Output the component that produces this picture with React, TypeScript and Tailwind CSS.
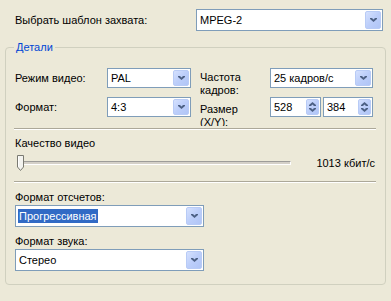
import React from "react";

const font = "font-['Tahoma','Liberation_Sans',sans-serif]";

const Arrow: React.FC<{ up?: boolean }> = ({ up }) => (
  <svg width="7" height="4" viewBox="0 0 7 4" className={up ? "rotate-180" : ""}>
    <path d="M0 0h2l1.5 1.5L5 0h2v1L3.5 4L0 1z" fill="#4D6185" />
  </svg>
);

const DropButton = () => (
  <div className="m-[1px] flex h-[calc(100%-2px)] w-[16px] shrink-0 items-center justify-center rounded-[2px] border border-[#B8CBF6] bg-gradient-to-br from-[#D5E1FE] via-[#BCCEFA] to-[#B0C5F6]">
    <Arrow />
  </div>
);

interface comboProps {
  value: string;
  className: string;
  selected?: boolean;
}

const Combo: React.FC<comboProps> = ({ value, className, selected }) => (
  <div className={"flex items-center border border-[#7F9DB9] bg-white " + className}>
    <div className="flex-1 pl-[2px]">
      {selected ? (
        <span className="bg-[#316AC5] px-[1px] py-[1px] text-white">{value}</span>
      ) : (
        <span className="pl-[1px]">{value}</span>
      )}
    </div>
    <DropButton />
  </div>
);

const Spinner: React.FC<{ value: string; className: string }> = ({ value, className }) => (
  <div className={"flex h-[20px] items-center border border-[#7F9DB9] bg-white " + className}>
    <span className="flex-1 pl-[3px]">{value}</span>
    <div className="m-[1px] flex h-[calc(100%-2px)] w-[13px] flex-col rounded-[2px] border border-[#B8CBF6] bg-gradient-to-br from-[#D5E1FE] via-[#BCCEFA] to-[#B0C5F6]">
      <div className="flex flex-1 items-end justify-center pb-[1px]">
        <Arrow up />
      </div>
      <div className="flex flex-1 items-start justify-center pt-[1px]">
        <Arrow />
      </div>
    </div>
  </div>
);

const Separator = () => (
  <div className="ml-[8px] mr-[9px] border-t border-b border-t-[#ACA899] border-b-white" />
);

export default function App() {
  return (
    <div className={"h-[301px] w-[391px] bg-[#ECE9D8] pt-[9px] text-[11px] leading-[13px] text-black " + font}>
      {/* template */}
      <div className="flex items-center pl-[15px]">
        <div className="w-[181px]">Выбрать шаблон захвата:</div>
        <Combo value="MPEG-2" className="h-[22px] w-[187px]" />
      </div>

      {/* details group */}
      <div className="relative mx-[5px] mt-[16px] h-[238px] rounded-[4px] border border-[#D0D0BF] pt-[20px]">
        <div className="absolute left-[8px] top-[-7px] bg-[#ECE9D8] px-[2px] text-[#0046D5]">Детали</div>

        <div className="flex h-[20px] items-start pl-[9px]">
          <div className="flex h-[20px] w-[92px] items-center">Режим видео:</div>
          <Combo value="PAL" className="h-[20px] w-[84px]" />
          <div className="ml-[9px] h-[20px] w-[70px]">
            <div className="pt-[3px]">
              Частота
              <br />
              кадров:
            </div>
          </div>
          <Combo value="25 кадров/с" className="h-[20px] w-[103px]" />
        </div>

        <div className="mt-[9px] flex h-[20px] items-start pl-[9px]">
          <div className="flex h-[20px] w-[92px] items-center">Формат:</div>
          <Combo value="4:3" className="h-[20px] w-[84px]" />
          <div className="ml-[9px] h-[20px] w-[70px]">
            <div className="h-[29px] overflow-hidden pt-[6px]">
              Размер
              <br />
              (X/Y):
            </div>
          </div>
          <Spinner value="528" className="w-[51px]" />
          <Spinner value="384" className="ml-[2px] w-[50px]" />
        </div>

        <div className="mt-[11px]">
          <Separator />
        </div>

        {/* quality */}
        <div className="mt-[7px] pl-[9px]">Качество видео</div>
        <div className="mt-[3px] flex h-[20px] items-center pl-[12px] pr-[10px]">
          <div className="relative h-[4px] w-[273px] border border-t-[#9D9C99] border-l-[#9D9C99] border-b-white border-r-white bg-[#D4D0C8]">
            <svg className="absolute left-[-2px] top-[-7px]" width="7" height="16" viewBox="0 0 7 16">
              <path d="M0.5 0.5h6v11.5l-3 3.5l-3-3.5z" fill="#F3F3EF" stroke="#7A7A72" />
              <path d="M1.5 1.5v10" stroke="#FFFFFF" />
            </svg>
          </div>
          <div className="flex-1 text-right">1013 кбит/с</div>
        </div>

        <div className="mt-[8px]">
          <Separator />
        </div>

        <div className="mt-[8px] pl-[9px]">Формат отсчетов:</div>
        <div className="mt-[1px] pl-[9px]">
          <Combo value="Прогрессивная" selected className="h-[22px] w-[189px]" />
        </div>
        <div className="mt-[8px] pl-[9px]">Формат звука:</div>
        <div className="mt-[1px] pl-[9px]">
          <Combo value="Стерео" className="h-[22px] w-[189px]" />
        </div>
      </div>
    </div>
  );
}
